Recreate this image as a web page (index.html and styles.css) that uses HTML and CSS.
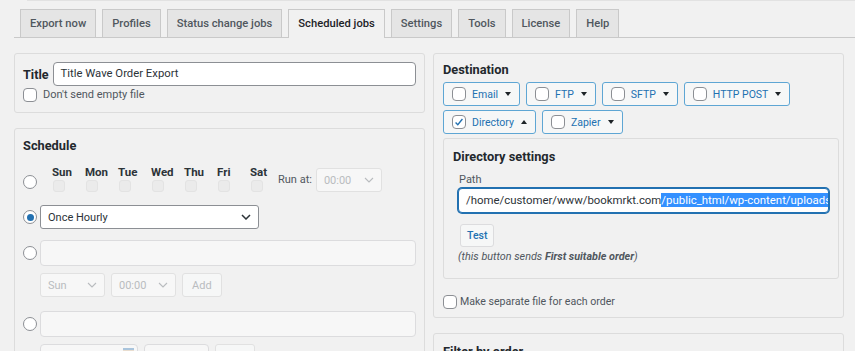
FILE: index.html
```html
<!DOCTYPE html>
<html lang="en">
<head>
  <meta charset="UTF-8">
  <title>Scheduled jobs</title>
  <link rel="stylesheet" href="styles.css">
</head>
<body>
<div class="topline"></div>
<nav class="tabs">
  <a class="tab">Export now</a>
  <a class="tab">Profiles</a>
  <a class="tab">Status change jobs</a>
  <a class="tab active">Scheduled jobs</a>
  <a class="tab">Settings</a>
  <a class="tab">Tools</a>
  <a class="tab">License</a>
  <a class="tab">Help</a>
</nav>

<div class="columns">
  <div class="col">
    <section class="box title-box">
      <div class="title-row">
        <label class="strong">Title</label>
        <div class="field">Title Wave Order Export</div>
      </div>
      <label class="check"><span class="cb"></span>Don't send empty file</label>
    </section>

    <section class="box schedule">
      <h3>Schedule</h3>
      <div class="row days-row">
        <span class="radio"></span>
        <div class="days">
          <div class="day"><b>Sun</b><span class="cb mini"></span></div>
          <div class="day"><b>Mon</b><span class="cb mini"></span></div>
          <div class="day"><b>Tue</b><span class="cb mini"></span></div>
          <div class="day"><b>Wed</b><span class="cb mini"></span></div>
          <div class="day"><b>Thu</b><span class="cb mini"></span></div>
          <div class="day"><b>Fri</b><span class="cb mini"></span></div>
          <div class="day"><b>Sat</b><span class="cb mini"></span></div>
        </div>
        <span class="run-at">Run at:</span>
        <span class="select off w-time">00:00<svg viewBox="0 0 10 6"><path d="M1 1l4 4 4-4"/></svg></span>
      </div>

      <div class="row hourly-row">
        <span class="radio on"></span>
        <span class="select w-hourly">Once Hourly<svg viewBox="0 0 10 6"><path d="M1 1l4 4 4-4"/></svg></span>
      </div>

      <div class="row custom-row">
        <span class="radio"></span>
        <div class="field off wide"></div>
      </div>
      <div class="sub-row">
        <span class="select off w-day">Sun<svg viewBox="0 0 10 6"><path d="M1 1l4 4 4-4"/></svg></span>
        <span class="select off w-day">00:00<svg viewBox="0 0 10 6"><path d="M1 1l4 4 4-4"/></svg></span>
        <span class="btn off">Add</span>
      </div>

      <div class="row custom-row later">
        <span class="radio"></span>
        <div class="field off wide"></div>
      </div>
      <div class="sub-row">
        <span class="field off w-date"><i class="cal"></i></span>
        <span class="field off w-day"></span>
        <span class="btn off">Add</span>
      </div>
    </section>
  </div>

  <div class="col">
    <section class="box destination">
      <h3>Destination</h3>
      <div class="dest-buttons">
        <span class="dest"><span class="cb"></span>Email<i class="caret"></i></span>
        <span class="dest"><span class="cb"></span>FTP<i class="caret"></i></span>
        <span class="dest"><span class="cb"></span>SFTP<i class="caret"></i></span>
        <span class="dest"><span class="cb"></span>HTTP POST<i class="caret"></i></span>
        <span class="dest"><span class="cb checked"><svg viewBox="0 0 14 14"><path d="M3 7.5l2.6 2.6L11 3.5"/></svg></span>Directory<i class="caret up"></i></span>
        <span class="dest"><span class="cb"></span>Zapier<i class="caret"></i></span>
      </div>

      <div class="box inner">
        <h3>Directory settings</h3>
        <div class="path-label">Path</div>
        <div class="field focus">/home/customer/www/bookmrkt.com<span class="sel">/public_html/wp-content/uploads/</span></div>
        <span class="btn test">Test</span>
        <p class="note">(this button sends <b>First suitable order</b>)</p>
      </div>

      <label class="check separate"><span class="cb"></span>Make separate file for each order</label>
    </section>

    <section class="box filter">
      <h3>Filter by order <i class="caret"></i></h3>
    </section>
  </div>
</div>
</body>
</html>
```

FILE: styles.css
```css
body {
  margin: 0;
  background: #f1f1f1;
  font-family: Roboto, "Noto Sans", sans-serif;
  font-size: 11px;
  color: #3c434a;
  overflow: hidden;
}
.topline {
  height: 1px;
  margin-left: 27px;
  background: #e2e2e2;
}
.tabs {
  display: flex;
  gap: 6px;
  margin: 8px 0 0 14px;
  padding-left: 6px;
  border-bottom: 1px solid #c9c9c9;
  height: 28px;
}
.tab {
  display: block;
  height: 27px;
  line-height: 27px;
  padding: 0 9px;
  border: 1px solid #c9c9c9;
  border-bottom: none;
  background: #e5e5e5;
  color: #50575e;
  font-weight: 500;
  font-size: 11.2px;
}
.tab.active {
  background: #f1f1f1;
  color: #1d2327;
  height: 28px;
}
.columns {
  display: grid;
  grid-template-columns: 411px 411px;
  gap: 8px;
  margin: 15px 0 0 14px;
}
.col {
  display: flex;
  flex-direction: column;
  gap: 15px;
}
.box {
  border: 1px solid #dcdcdc;
  border-radius: 3px;
  padding: 8px;
}
h3 {
  margin: 0;
  font-size: 12.8px;
  line-height: 18px;
  font-weight: 700;
  color: #23282d;
}
.strong {
  font-weight: 700;
  font-size: 12.6px;
  color: #23282d;
}

/* form bits */
.field {
  box-sizing: border-box;
  height: 24px;
  line-height: 22px;
  padding: 0 7px;
  background: #fff;
  border: 1px solid #8c8f94;
  border-radius: 4px;
  font-size: 11.3px;
  color: #2c3338;
  white-space: nowrap;
  overflow: hidden;
}
.field.off {
  background: #f7f7f7;
  border-color: #dcdcde;
}
.cb {
  box-sizing: border-box;
  display: inline-flex;
  align-items: center;
  justify-content: center;
  width: 14px;
  height: 14px;
  background: #fff;
  border: 1px solid #8c8f94;
  border-radius: 4px;
  flex: none;
}
.cb svg {
  width: 14px;
  height: 14px;
  fill: none;
  stroke: #2271b1;
  stroke-width: 1.6;
}
.cb.mini {
  width: 12px;
  height: 12px;
  background: #ebebeb;
  border-color: #e3e3e3;
  border-radius: 3px;
}
.radio {
  box-sizing: border-box;
  display: inline-flex;
  align-items: center;
  justify-content: center;
  width: 14px;
  height: 14px;
  border: 1px solid #8c8f94;
  border-radius: 50%;
  background: #fff;
  flex: none;
}
.radio.on::after {
  content: "";
  width: 7px;
  height: 7px;
  border-radius: 50%;
  background: #2271b1;
}
.check {
  display: flex;
  align-items: center;
  gap: 6px;
  line-height: 16px;
  color: #50575e;
  font-size: 11px;
}
.select {
  box-sizing: border-box;
  display: inline-flex;
  align-items: center;
  justify-content: space-between;
  height: 24px;
  padding: 0 7px;
  background: #fff;
  border: 1px solid #8c8f94;
  border-radius: 3px;
  font-size: 11px;
  color: #2c3338;
}
.select svg {
  width: 10px;
  height: 6px;
  fill: none;
  stroke: #2c3338;
  stroke-width: 1.5;
}
.select.off {
  background: #f7f7f7;
  border-color: #e1e1e1;
  color: #b9bcbf;
}
.select.off svg {
  stroke: #b9bcbf;
  stroke-width: 1.1;
}
.btn {
  box-sizing: border-box;
  display: inline-flex;
  align-items: center;
  justify-content: center;
  height: 24px;
  padding: 0 9px;
  border: 1px solid #dcdcde;
  border-radius: 3px;
  background: #f6f7f7;
  font-size: 11px;
}
.btn.off {
  color: #b9bcbf;
  border-color: #e1e1e1;
}

/* title box */
.title-box {
  padding-bottom: 9px;
}
.title-row {
  display: flex;
  align-items: center;
  gap: 4px;
}
.title-row .field {
  flex: 1;
}
.title-box .check {
  margin-top: 1px;
}

/* schedule */
.schedule h3 {
  margin: 0 0 10px;
}
.row {
  display: flex;
  align-items: center;
  gap: 3px;
}
.days-row {
  align-items: flex-end;
  gap: 0;
}
.days-row .radio {
  margin-bottom: 3px;
}
.days {
  display: flex;
  gap: 5px;
  margin-left: 15px;
}
.day {
  width: 28px;
  display: flex;
  flex-direction: column;
  gap: 1px;
}
.day b {
  font-size: 11.5px;
  color: #2c3338;
  line-height: 14px;
}
.day .cb {
  margin-left: 1px;
}
.run-at {
  align-self: flex-start;
  margin-top: 8px;
  color: #50575e;
}
.w-time {
  width: 66px;
  margin-left: 4px;
}
.hourly-row {
  margin-top: 13px;
}
.w-hourly {
  width: 219px;
}
.custom-row {
  margin-top: 11px;
}
.custom-row.later {
  margin-top: 14px;
}
.wide {
  flex: 1;
  height: 26px;
}
.sub-row {
  display: flex;
  gap: 6px;
  margin: 7px 0 0 17px;
}
.w-day {
  width: 65px;
}
.w-date {
  width: 98px;
  position: relative;
}
.cal {
  position: absolute;
  right: 3px;
  top: 3px;
  width: 11px;
  height: 10px;
  background: #e9ddcf;
  border-top: 2px solid #a9c4dc;
}

/* destination */
.destination {
  padding: 7px 4px 7px 9px;
}
.destination h3 {
  margin: 0 0 3px;
}
.dest-buttons {
  display: flex;
  flex-wrap: wrap;
  gap: 4px 6px;
}
.dest {
  box-sizing: border-box;
  display: inline-flex;
  align-items: center;
  height: 24px;
  padding: 0 8px 0 8px;
  border: 1px solid #5ea6d4;
  border-radius: 3px;
  background: #f6f7f7;
  color: #2271b1;
  font-size: 10.5px;
}
.dest .cb {
  margin-right: 6px;
}
.caret {
  margin-left: 7px;
  width: 0;
  height: 0;
  border-left: 3.5px solid transparent;
  border-right: 3.5px solid transparent;
  border-top: 4px solid #1d2327;
}
.caret.up {
  border-top: none;
  border-bottom: 4px solid #1d2327;
}
.inner {
  margin: 4px 0 0 0;
  padding: 9px 8px 13px 9px;
}
.path-label {
  margin: 6px 0 0 6px;
  line-height: 16px;
  color: #50575e;
  font-size: 11px;
}
.field.focus {
  height: 25px;
  line-height: 23px;
  margin: 0 1px 0 5px;
  border-color: #2271b1;
  box-shadow: 0 0 0 1px #2271b1;
  padding-left: 7px;
  font-size: 11.4px;
}
.sel {
  background: #3390ff;
  color: #fff;
}
.test {
  margin: 11px 0 0 7px;
  height: 23px;
  padding: 0 6px;
  color: #2271b1;
  font-weight: 500;
  font-size: 10.5px;
}
.note {
  margin: 2px 0 0 5px;
  line-height: 16px;
  font-style: italic;
  color: #50575e;
  font-size: 10.8px;
}
.separate {
  margin-top: 15px;
  gap: 3px;
  font-size: 10.6px;
}
.filter {
  padding: 9px 9px 30px;
}
.filter .caret {
  display: inline-block;
  vertical-align: middle;
}
```
